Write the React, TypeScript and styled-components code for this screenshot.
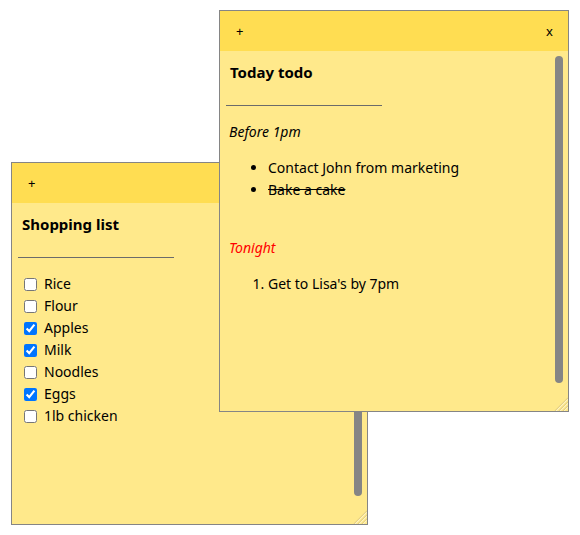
import React from "react";
import styled, { createGlobalStyle } from "styled-components";

const Global = createGlobalStyle`
  html, body { margin: 0; padding: 0; background: #ffffff; }
  body { font-family: "Noto Sans", "DejaVu Sans", sans-serif; color: #000; }
  * { box-sizing: border-box; }
`;

const Desk = styled.div`
  position: relative;
  width: 580px;
  height: 535px;
  overflow: hidden;
`;

const Note = styled.div<{ $x: number; $y: number; $w: number; $h: number }>`
  position: absolute;
  left: ${(p) => p.$x}px;
  top: ${(p) => p.$y}px;
  width: ${(p) => p.$w}px;
  height: ${(p) => p.$h}px;
  border: 1px solid #858585;
  display: flex;
  flex-direction: column;
  background: #ffe98b;
`;

const Header = styled.div`
  height: 40px;
  flex: none;
  background: #ffdd52;
  display: flex;
  align-items: center;
  justify-content: space-between;
  padding: 0 15px 0 16px;
`;

const HeaderButton = styled.button`
  background: none;
  border: none;
  padding: 0;
  margin: 0;
  font-family: "Noto Sans", "DejaVu Sans", sans-serif;
  font-size: 13px;
  line-height: 16px;
  color: #000;
  cursor: pointer;
`;

const Body = styled.div`
  flex: 1;
  min-height: 0;
  display: flex;
  overflow: hidden;
  font-size: 14px;
  line-height: 22px;
`;

const Content = styled.div`
  flex: 1;
  min-width: 0;
  padding: 10px 0 0 10px;
`;

const Rail = styled.div`
  width: 13px;
  flex: none;
  display: flex;
  flex-direction: column;
  padding-top: 5px;
`;

const Thumb = styled.div<{ $gap: number }>`
  flex: 1;
  width: 8px;
  margin-bottom: ${(p) => p.$gap}px;
  background: #858585;
  border-radius: 4px;
`;

const Grip = styled.svg`
  display: block;
  width: 15px;
  height: 15px;
  margin-left: -2px;
  flex: none;
`;

const Title = styled.div`
  font-weight: 700;
  font-size: 15px;
  line-height: 22px;
`;

const Rule = styled.hr`
  width: 156px;
  height: 0;
  border: none;
  border-top: 1px solid #6b6b6b;
  margin: 22px 0 15px -4px;
`;

const Section = styled.div<{ $red?: boolean }>`
  font-style: italic;
  margin-left: -1px;
  color: ${(p) => (p.$red ? "#ff0000" : "#000")};
`;

const Blank = styled.div`
  height: 22px;
`;

const Bullets = styled.ul`
  margin: 14px 0;
  padding-left: 38px;
`;

const Numbers = styled.ol`
  margin: 14px 0;
  padding-left: 38px;
`;

const Done = styled.li`
  text-decoration: line-through;
`;

const CheckRow = styled.label`
  display: flex;
  align-items: center;
  height: 22px;
`;

const Box = styled.input`
  width: 13px;
  height: 13px;
  margin: 0 7px 0 2px;
`;

const shopping: [string, boolean][] = [
  ["Rice", false],
  ["Flour", false],
  ["Apples", true],
  ["Milk", true],
  ["Noodles", false],
  ["Eggs", true],
  ["1lb chicken", false],
];

function ScrollRail({ gap }: { gap: number }) {
  return (
    <Rail>
      <Thumb $gap={gap} />
      <Grip viewBox="0 0 15 15">
        <line x1="2" y1="15" x2="15" y2="2" stroke="#e6d285" strokeWidth="1.2" />
        <line x1="3.2" y1="15" x2="15" y2="3.2" stroke="#fff6d2" strokeWidth="1" />
        <line x1="6" y1="15" x2="15" y2="6" stroke="#e6d285" strokeWidth="1.2" />
        <line x1="7.2" y1="15" x2="15" y2="7.2" stroke="#fff6d2" strokeWidth="1" />
        <line x1="10" y1="15" x2="15" y2="10" stroke="#e6d285" strokeWidth="1.2" />
        <line x1="11.2" y1="15" x2="15" y2="11.2" stroke="#fff6d2" strokeWidth="1" />
      </Grip>
    </Rail>
  );
}

export default function App() {
  return (
    <>
      <Global />
      <Desk>
        <Note $x={11} $y={162} $w={357} $h={363}>
          <Header>
            <HeaderButton>+</HeaderButton>
            <HeaderButton>x</HeaderButton>
          </Header>
          <Body>
            <Content>
              <Title>Shopping list</Title>
              <Rule />
              {shopping.map(([label, checked]) => (
                <CheckRow key={label}>
                  <Box type="checkbox" defaultChecked={checked} />
                  {label}
                </CheckRow>
              ))}
            </Content>
            <ScrollRail gap={13} />
          </Body>
        </Note>
        <Note $x={219} $y={10} $w={350} $h={402}>
          <Header>
            <HeaderButton>+</HeaderButton>
            <HeaderButton>x</HeaderButton>
          </Header>
          <Body>
            <Content>
              <Title>Today todo</Title>
              <Rule />
              <Section>Before 1pm</Section>
              <Bullets>
                <li>Contact John from marketing</li>
                <Done>Bake a cake</Done>
              </Bullets>
              <Blank />
              <Section $red>Tonight</Section>
              <Numbers>
                <li>Get to Lisa's by 7pm</li>
              </Numbers>
            </Content>
            <ScrollRail gap={13} />
          </Body>
        </Note>
      </Desk>
    </>
  );
}
